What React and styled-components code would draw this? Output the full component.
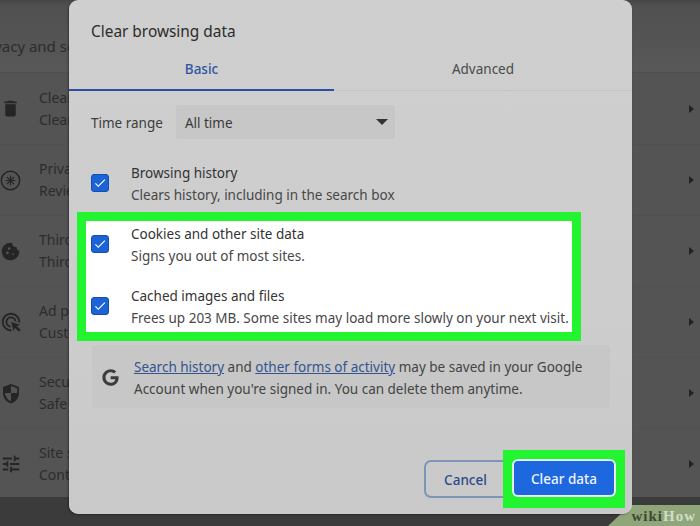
import styled, { createGlobalStyle } from 'styled-components';
import { FaGoogle } from 'react-icons/fa';
import { MdAdsClick, MdCheck, MdCookie, MdDelete, MdTune } from 'react-icons/md';

const GlobalStyle = createGlobalStyle`
    html, body { margin: 0; padding: 0; background: #3c3c3c; }
    * { box-sizing: border-box; }
`;

const Screen = styled.div`
    position: relative;
    width: 700px;
    height: 526px;
    overflow: hidden;
    background: #3b3b3b;
    font-family: "Noto Sans", "Open Sans", sans-serif;
`;

const SettingsPage = styled.div`
    height: 497px;
    background: #545454;
    color: #2c2c2c;
`;

const PageHeading = styled.div`
    height: 73px;
    padding-top: 35px;
    margin-left: -25px;
    font-size: 15px;
    line-height: 22px;
    border-bottom: 1px solid #505050;
    background: linear-gradient(#464646 0, #505050 6px, #585858 100%);
`;

const SettingsRow = styled.div`
    height: 71px;
    display: flex;
    align-items: center;
    padding: 0 6px 0 0;
    border-top: ${(p) => (p.$first ? 'none' : '1px solid #515151')};
`;

const RowIcon = styled.div`
    width: 39px;
    display: flex;
    justify-content: flex-start;
    color: #252525;
`;

const RowText = styled.div`
    flex: 1;
    font-size: 14px;
    line-height: 22px;
`;

const Chevron = styled.span`
    width: 0;
    height: 0;
    border-left: 5px solid #222;
    border-top: 4.5px solid transparent;
    border-bottom: 4.5px solid transparent;
`;

const Dialog = styled.div`
    position: absolute;
    left: 69px;
    top: 0;
    width: 563px;
    height: 514px;
    display: flex;
    flex-direction: column;
    background: linear-gradient(#cfcfcf 0, #cdcdcd 60%, #c9c9c9 100%);
    border-radius: 9px;
    box-shadow: -1px 1px 2px rgba(0, 0, 0, 0.35);
    color: #333;
`;

const Title = styled.div`
    height: 56px;
    padding: 20px 0 0 22px;
    font-size: 15.4px;
    line-height: 24px;
    color: #2b2b2b;
`;

const Tabs = styled.div`
    display: flex;
    height: 35px;
    border-bottom: 1px solid #c4c4c4;
`;

const Tab = styled.div`
    flex: ${(p) => (p.$active ? '0 0 265px' : '1')};
    height: ${(p) => (p.$active ? '35px' : 'auto')};
    padding-top: 3px;
    text-align: center;
    font-size: 13.5px;
    line-height: 20px;
    font-weight: ${(p) => (p.$active ? 500 : 400)};
    color: ${(p) => (p.$active ? '#31549f' : '#4a4a4a')};
    border-bottom: ${(p) => (p.$active ? '2px solid #2a4fa3' : 'none')};
`;

const RangeRow = styled.div`
    display: flex;
    align-items: center;
    gap: 13px;
    margin: 14px 0 0 22px;
    font-size: 13.5px;
    color: #3c3c3c;
`;

const RangeLabel = styled.span`
    padding-top: 2px;
`;

const RangeSelect = styled.div`
    width: 219px;
    height: 34px;
    display: flex;
    align-items: center;
    justify-content: space-between;
    padding: 2px 7px 0 9px;
    background: #c7c7c7;
    border-radius: 3px;
    color: #3a3a3a;
`;

const Caret = styled.span`
    width: 0;
    height: 0;
    margin-bottom: 3px;
    border-top: 6px solid #333;
    border-left: 6px solid transparent;
    border-right: 6px solid transparent;
`;

const OptionRow = styled.div`
    display: flex;
    align-items: center;
    height: ${(p) => (p.$inset ? '48px' : '56px')};
    padding-left: ${(p) => (p.$inset ? '5px' : '22px')};
`;

const CheckBox = styled.span`
    width: 18px;
    height: 18px;
    margin: -2px 22px 0 0;
    display: flex;
    align-items: center;
    justify-content: center;
    background: #1b63d6;
    border: 1px solid #174ea8;
    border-radius: 3px;
    color: #fff;
    font-size: 14px;
`;

const OptionText = styled.div`
    font-size: 13.5px;
    line-height: 22px;
    white-space: nowrap;
`;

const OptionTitle = styled.div`
    color: #333;
`;

const OptionDetail = styled.div`
    color: #474747;
`;

const Highlight = styled.div`
    width: 504px;
    height: 129px;
    margin-left: 8px;
    display: flex;
    flex-direction: column;
    gap: 14px;
    background: #fff;
    border: 9px solid #22f52f;
`;

const FirstOption = styled.div`
    margin-top: 17px;
`;

const InfoBox = styled.div`
    width: 518px;
    height: 63px;
    margin: 4px 0 0 23px;
    display: flex;
    align-items: center;
    padding: 2px 0 0 10px;
    background: #c7c7c7;
    border-radius: 3px;
    font-size: 13.5px;
    line-height: 22px;
    color: #444;
`;

const GoogleMark = styled.span`
    width: 32px;
    display: flex;
    color: #3c3c3c;
    font-size: 17px;
`;

const InfoLink = styled.a`
    color: #33548f;
    text-decoration: underline;
`;

const Footer = styled.div`
    flex: 1;
    display: flex;
    justify-content: flex-end;
    align-items: flex-end;
    padding: 0 7px 6px 0;
`;

const CancelButton = styled.button`
    width: 89px;
    height: 38px;
    margin: 0 -10px 10px 0;
    padding: 2px 6px 0 0;
    background: transparent;
    border: 2px solid #7f95b8;
    border-radius: 7px;
    font: 500 13.5px "Noto Sans", sans-serif;
    color: #2b4a8e;
`;

const PrimaryFrame = styled.div`
    position: relative;
    width: 122px;
    height: 58px;
    padding: 9px;
    background: #22f52f;
`;

const PrimaryButton = styled.button`
    width: 104px;
    height: 38px;
    padding-top: 2px;
    background: #1d68df;
    border: 2px solid #e6f0ee;
    border-radius: 6px;
    font: 500 13.5px "Noto Sans", sans-serif;
    color: #eef4ff;
`;

const Watermark = styled.div`
    position: absolute;
    right: 0;
    bottom: 0;
    width: 92px;
    height: 21px;
    padding: 1px 4px 0 0;
    text-align: right;
    background: #8fa57a;
    clip-path: polygon(24% 0, 100% 0, 100% 100%, 0 100%);
    font: 700 15px/20px "Liberation Serif", serif;
    letter-spacing: 1px;
`;

const WikiPart = styled.span`
    color: #3d4a33;
`;

const HowPart = styled.span`
    color: #d3dcc8;
`;

function PrivacyIcon() {
    return (
        <svg width="21" height="21" viewBox="0 0 21 21" fill="none" stroke="#252525" strokeWidth="1.5">
            <circle cx="10.5" cy="10.5" r="9.2" />
            <path d="M10.5 5.5v10M5.5 10.5h10M7 7l7 7M14 7l-7 7" strokeWidth="1.1" />
        </svg>
    );
}

function ShieldIcon() {
    return (
        <svg width="18" height="21" viewBox="0 0 18 21" style={{ marginLeft: 2 }}>
            <path d="M9 1 1 4v6c0 5 3.4 9.2 8 10.4 4.6-1.2 8-5.4 8-10.4V4z" fill="#252525" />
            <path d="M9 3 15.2 5.3V10H9zM9 10H3c.4 3.6 2.8 7 6 8.3z" fill="#545454" />
        </svg>
    );
}

const rows = [
    { icon: <MdDelete size={21} />, title: 'Clear', detail: 'Clear' },
    { icon: <PrivacyIcon />, title: 'Privacy', detail: 'Review' },
    { icon: <MdCookie size={21} />, title: 'Third', detail: 'Third' },
    { icon: <MdAdsClick size={22} />, title: 'Ad p', detail: 'Custom' },
    { icon: <ShieldIcon />, title: 'Security', detail: 'Safe' },
    { icon: <MdTune size={22} />, title: 'Site s', detail: 'Control' },
];

export default function App() {
    return (
        <Screen>
            <GlobalStyle />
            <SettingsPage>
                <PageHeading>Privacy and security</PageHeading>
                {rows.map((row, i) => (
                    <SettingsRow key={row.title} $first={i === 0}>
                        <RowIcon>{row.icon}</RowIcon>
                        <RowText>
                            <div>{row.title}</div>
                            <div>{row.detail}</div>
                        </RowText>
                        <Chevron />
                    </SettingsRow>
                ))}
            </SettingsPage>

            <Watermark>
                <WikiPart>wiki</WikiPart>
                <HowPart>How</HowPart>
            </Watermark>

            <Dialog>
                <Title>Clear browsing data</Title>
                <Tabs>
                    <Tab $active>Basic</Tab>
                    <Tab>Advanced</Tab>
                </Tabs>
                <RangeRow>
                    <RangeLabel>Time range</RangeLabel>
                    <RangeSelect>
                        All time
                        <Caret />
                    </RangeSelect>
                </RangeRow>
                <FirstOption>
                    <OptionRow>
                        <CheckBox><MdCheck /></CheckBox>
                        <OptionText>
                            <OptionTitle>Browsing history</OptionTitle>
                            <OptionDetail>Clears history, including in the search box</OptionDetail>
                        </OptionText>
                    </OptionRow>
                </FirstOption>
                <Highlight>
                    <OptionRow $inset>
                        <CheckBox><MdCheck /></CheckBox>
                        <OptionText>
                            <OptionTitle>Cookies and other site data</OptionTitle>
                            <OptionDetail>Signs you out of most sites.</OptionDetail>
                        </OptionText>
                    </OptionRow>
                    <OptionRow $inset>
                        <CheckBox><MdCheck /></CheckBox>
                        <OptionText>
                            <OptionTitle>Cached images and files</OptionTitle>
                            <OptionDetail>Frees up 203 MB. Some sites may load more slowly on your next visit.</OptionDetail>
                        </OptionText>
                    </OptionRow>
                </Highlight>
                <InfoBox>
                    <GoogleMark><FaGoogle /></GoogleMark>
                    <div>
                        <InfoLink>Search history</InfoLink> and <InfoLink>other forms of activity</InfoLink> may be saved in your Google
                        <br />
                        Account when you're signed in. You can delete them anytime.
                    </div>
                </InfoBox>
                <Footer>
                    <CancelButton>Cancel</CancelButton>
                    <PrimaryFrame>
                        <PrimaryButton>Clear data</PrimaryButton>
                    </PrimaryFrame>
                </Footer>
            </Dialog>
        </Screen>
    );
}
